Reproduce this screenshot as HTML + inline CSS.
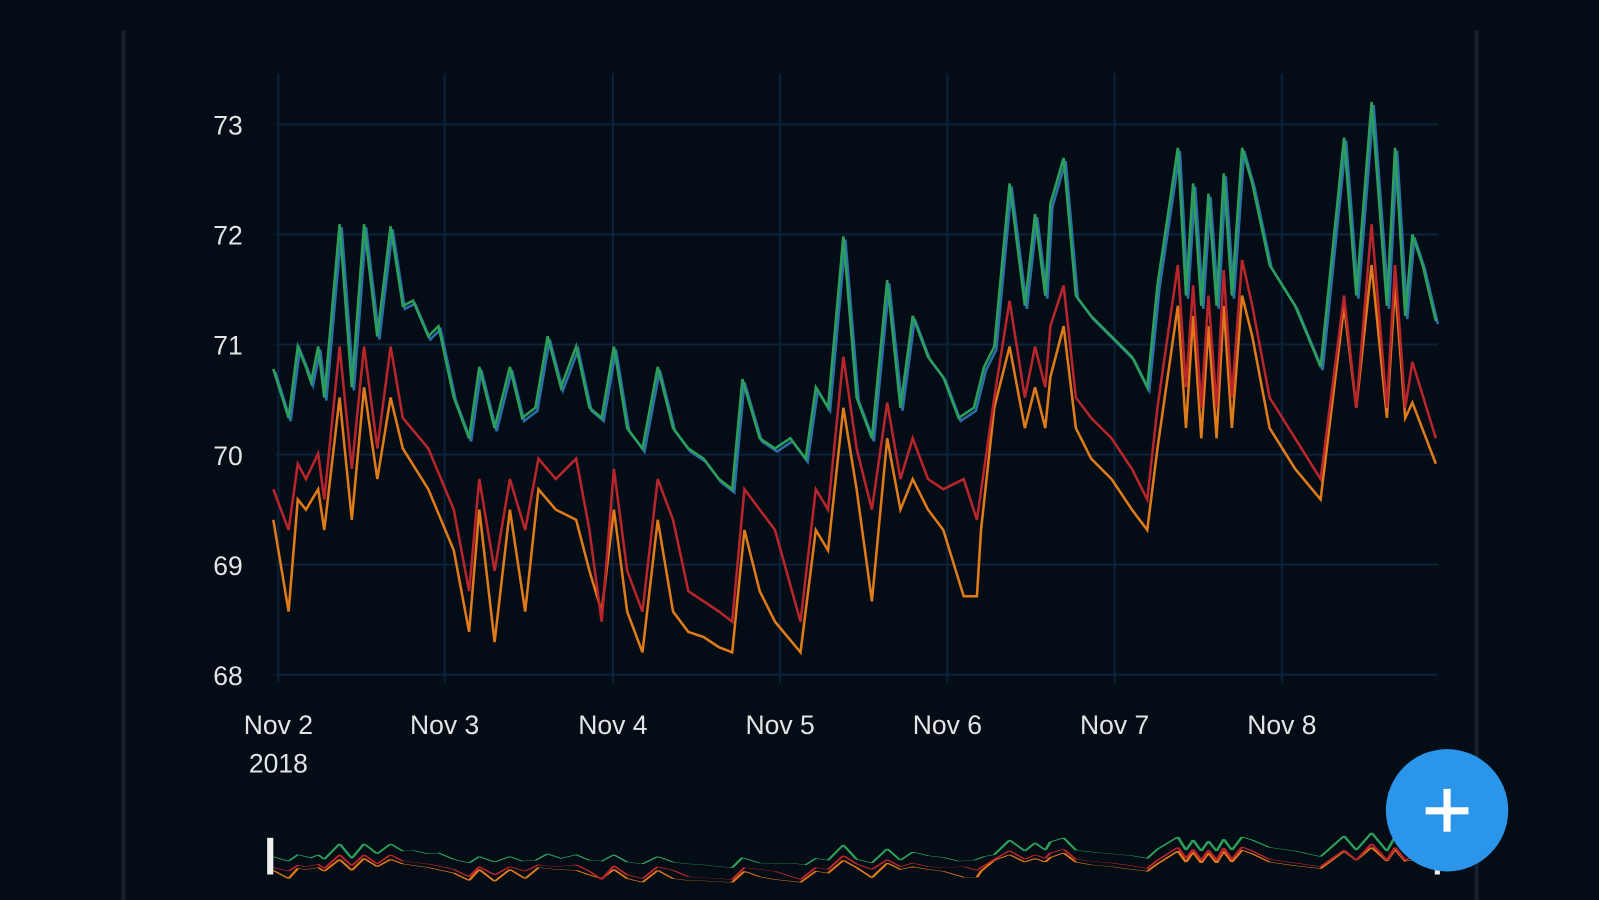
<!DOCTYPE html>
<html><head><meta charset="utf-8"><style>
html,body{margin:0;padding:0;background:#040c16;width:1599px;height:900px;overflow:hidden}
svg{display:block}
text{font-family:"Liberation Sans",sans-serif;fill:#e4e4e4;font-size:26px}
</style></head><body>
<svg width="1599" height="900" viewBox="0 0 1568 883" preserveAspectRatio="none">
<rect width="1568" height="883" fill="#040c16"/>
<line x1="121" y1="30" x2="121" y2="883" stroke="#18222e" stroke-width="4"/>
<line x1="1448" y1="30" x2="1448" y2="883" stroke="#18222e" stroke-width="4"/>
<g stroke="#0b223a" stroke-width="2">
<line x1="270" y1="122" x2="1410" y2="122"/><line x1="270" y1="230" x2="1410" y2="230"/>
<line x1="270" y1="338" x2="1410" y2="338"/><line x1="270" y1="446" x2="1410" y2="446"/>
<line x1="270" y1="554" x2="1410" y2="554"/><line x1="270" y1="662" x2="1410" y2="662"/>
<line x1="273" y1="72" x2="273" y2="670"/><line x1="436" y1="72" x2="436" y2="670"/>
<line x1="601" y1="72" x2="601" y2="670"/><line x1="765" y1="72" x2="765" y2="670"/>
<line x1="929" y1="72" x2="929" y2="670"/><line x1="1093" y1="72" x2="1093" y2="670"/>
<line x1="1257" y1="72" x2="1257" y2="670"/>
</g>
<g text-anchor="end"><text x="238" y="132">73</text><text x="238" y="240">72</text><text x="238" y="348">71</text><text x="238" y="456">70</text><text x="238" y="564">69</text><text x="238" y="672">68</text></g>
<g text-anchor="middle"><text x="273" y="720">Nov 2</text><text x="273" y="758">2018</text><text x="436" y="720">Nov 3</text><text x="601" y="720">Nov 4</text><text x="765" y="720">Nov 5</text><text x="929" y="720">Nov 6</text><text x="1093" y="720">Nov 7</text><text x="1257" y="720">Nov 8</text></g>
<defs>
<polyline id="g" fill="none" points="268,362 283,410 292,340 300,360 305,375 312,340 318,390 333,220 345,380 357,220 370,330 383,222 395,300 405,295 420,330 430,320 445,390 460,430 470,360 485,420 500,360 512,410 525,400 537,330 550,380 565,340 578,400 590,410 602,340 615,420 630,440 645,360 660,420 675,440 690,450 705,470 718,480 728,372 745,430 760,440 775,430 790,450 800,380 812,400 827,232 840,390 855,430 870,275 883,400 895,310 910,350 925,370 940,410 955,400 965,360 975,340 990,180 1005,300 1015,210 1025,290 1030,200 1043,155 1055,290 1070,310 1090,330 1110,350 1125,380 1135,280 1155,145 1163,290 1170,180 1178,300 1185,190 1193,300 1200,170 1208,290 1218,145 1228,180 1245,260 1270,300 1295,360 1318,135 1330,290 1345,100 1360,300 1368,145 1378,310 1385,230 1395,260 1408,315"/>
<polyline id="r" fill="none" points="268,480 283,520 292,455 300,470 312,445 318,490 333,340 345,460 357,340 370,440 383,340 395,410 420,440 445,500 460,580 470,470 485,560 500,470 515,520 528,450 545,470 565,450 578,520 590,610 602,460 615,560 630,600 645,470 660,510 675,580 690,590 705,600 718,610 730,480 745,500 760,520 785,610 800,480 812,500 827,350 840,440 855,500 870,395 883,470 895,430 910,470 925,480 945,470 958,510 975,390 990,295 1005,390 1015,340 1025,380 1030,320 1043,280 1055,390 1070,410 1090,430 1110,460 1125,490 1135,400 1155,260 1163,380 1170,280 1178,400 1185,290 1193,400 1200,265 1208,390 1218,255 1228,300 1245,390 1270,430 1295,470 1318,290 1330,400 1345,220 1360,400 1368,260 1378,400 1385,355 1408,430"/>
<polyline id="o" fill="none" points="268,510 283,600 292,490 300,500 312,480 318,520 333,390 345,510 357,380 370,470 383,390 395,440 420,480 445,540 460,620 470,500 485,630 500,500 515,600 528,480 545,500 565,510 578,560 590,600 602,500 615,600 630,640 645,510 660,600 675,620 690,625 705,635 718,640 730,520 745,580 760,610 785,640 800,520 812,540 827,400 840,480 855,590 870,430 883,500 895,470 910,500 925,520 945,585 958,585 962,520 975,400 990,340 1005,420 1015,380 1025,420 1030,370 1043,320 1055,420 1070,450 1090,470 1110,500 1125,520 1135,440 1155,300 1163,420 1170,310 1178,430 1185,320 1193,430 1200,300 1208,420 1218,290 1228,330 1245,420 1270,460 1295,490 1318,300 1330,400 1345,260 1360,410 1368,280 1378,410 1385,395 1408,455"/>
</defs>
<use href="#o" stroke="#e07b1a" stroke-width="2.5"/>
<use href="#r" stroke="#b8262c" stroke-width="2.5"/>
<use href="#g" stroke="#2a6fa8" stroke-width="2.5" transform="translate(2,3)"/>
<use href="#g" stroke="#2ca05a" stroke-width="2.5"/>
<g transform="translate(0,808) scale(1,0.09)">
<use href="#o" stroke="#e07b1a" stroke-width="3" vector-effect="non-scaling-stroke"/>
<use href="#r" stroke="#b8262c" stroke-width="3" vector-effect="non-scaling-stroke"/>
<use href="#g" stroke="#2ca05a" stroke-width="3" vector-effect="non-scaling-stroke"/>
</g>
<rect x="262" y="822" width="6" height="36" fill="#f0f0f0"/>
<rect x="1407" y="822" width="5" height="36" fill="#f0f0f0"/>
<circle cx="1419" cy="795" r="60" fill="#2b95ea"/>
<rect x="1398" y="792" width="42" height="7" fill="#fff"/>
<rect x="1415.5" y="774" width="7" height="42" fill="#fff"/>
</svg>
</body></html>
